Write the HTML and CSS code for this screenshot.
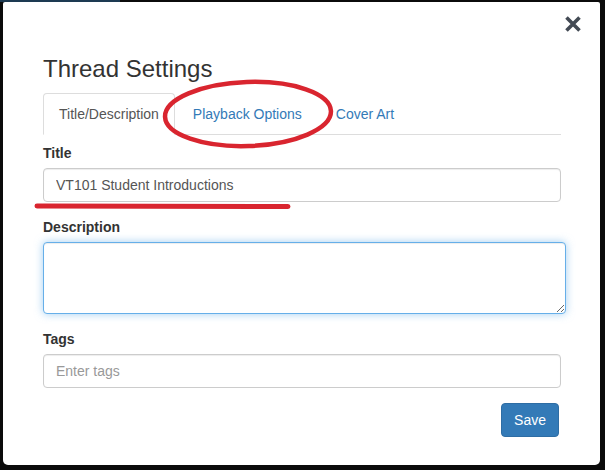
FILE: index.html
```html
<!DOCTYPE html>
<html lang="en">
<head>
<meta charset="utf-8">
<title>Thread Settings</title>
<link rel="stylesheet" href="styles.css">
</head>
<body>
<div class="top-strip"></div>
<div class="modal">
  <button class="close" type="button" aria-label="Close">
    <svg width="18" height="18" viewBox="0 0 18 18"><path d="M2.5 2.5 L15.5 15.5 M15.5 2.5 L2.5 15.5" stroke="#434a54" stroke-width="3.6" fill="none"/></svg>
  </button>
  <h3 class="modal-title">Thread Settings</h3>
  <ul class="nav-tabs">
    <li class="tab active"><a>Title/Description</a></li>
    <li class="tab"><a>Playback Options</a></li>
    <li class="tab"><a>Cover Art</a></li>
  </ul>
  <div class="tab-content">
    <div class="form-group">
      <label class="label">Title</label>
      <input class="form-control" type="text" value="VT101 Student Introductions">
    </div>
    <div class="form-group">
      <label class="label">Description</label>
      <textarea class="form-control textarea focused"></textarea>
    </div>
    <div class="form-group">
      <label class="label">Tags</label>
      <input class="form-control" type="text" placeholder="Enter tags">
    </div>
    <div class="footer">
      <button class="btn-primary" type="button">Save</button>
    </div>
  </div>
</div>
<svg class="annotations" width="605" height="470" viewBox="0 0 605 470">
  <ellipse cx="248" cy="114" rx="83" ry="32" transform="rotate(-2 248 114)" fill="none" stroke="#d9252f" stroke-width="4.5"/>
  <path d="M37 206 L288 206.5" stroke="#d9252f" stroke-width="5" stroke-linecap="round" fill="none"/>
</svg>
</body>
</html>
```
FILE: styles.css
```css
* { box-sizing: border-box; }
html, body {
  margin: 0;
  padding: 0;
  background: #0b0b0b;
  width: 605px;
  height: 470px;
  overflow: hidden;
  font-family: "Liberation Sans", Arial, Helvetica, sans-serif;
  font-size: 14px;
  line-height: 20px;
  color: #333;
}
body { position: relative; }
.top-strip {
  width: 120px;
  height: 2px;
  background: #1d3a52;
}
.modal {
  position: relative;
  margin-left: 3px;
  width: 597px;
  height: 463px;
  background: #fff;
  border-radius: 2px 2px 5px 5px;
  padding: 54px 39px 0 40px;
}
.close {
  position: absolute;
  top: 13px;
  right: 18px;
  width: 18px;
  height: 18px;
  padding: 0;
  margin: 0;
  border: 0;
  background: transparent;
  display: block;
}
.close svg { display: block; }
.modal-title {
  margin: 0 0 11px 0;
  font-size: 24px;
  line-height: 26px;
  font-weight: normal;
  color: #333;
}
.nav-tabs {
  list-style: none;
  margin: 0;
  padding: 0;
  display: flex;
  border-bottom: 1px solid #ddd;
}
.tab { margin-bottom: -1px; }
.tab a {
  display: block;
  padding: 10px 15px;
  margin-right: 2px;
  line-height: 20px;
  border: 1px solid transparent;
  border-radius: 4px 4px 0 0;
  color: #337ab7;
}
.tab.active a {
  color: #555;
  background: #fff;
  border-color: #ddd #ddd transparent #ddd;
}
.tab-content { padding-top: 8px; }
.form-group { margin-bottom: 15px; }
.label {
  display: block;
  margin-bottom: 5px;
  font-weight: bold;
  color: #333;
}
.form-control {
  display: block;
  width: 518px;
  height: 34px;
  padding: 6px 12px;
  font-family: "Liberation Sans", Arial, Helvetica, sans-serif;
  font-size: 14px;
  line-height: 20px;
  color: #555;
  background: #fff;
  border: 1px solid #ccc;
  border-radius: 4px;
  box-shadow: inset 0 1px 1px rgba(0,0,0,.075);
  outline: none;
}
.form-control::placeholder { color: #999; }
.textarea {
  width: 523px;
  height: 72px;
  resize: both;
}
.focused {
  border-color: #66afe9;
  box-shadow: inset 0 1px 1px rgba(0,0,0,.075), 0 0 8px rgba(102,175,233,.6);
}
.footer {
  display: flex;
  justify-content: flex-end;
  padding-right: 2px;
}
.btn-primary {
  height: 34px;
  padding: 6px 12px;
  font-family: "Liberation Sans", Arial, Helvetica, sans-serif;
  font-size: 14px;
  line-height: 20px;
  color: #fff;
  background: #337ab7;
  border: 1px solid #2e6da4;
  border-radius: 4px;
}
.annotations {
  position: absolute;
  top: 0;
  left: 0;
  pointer-events: none;
}
```
